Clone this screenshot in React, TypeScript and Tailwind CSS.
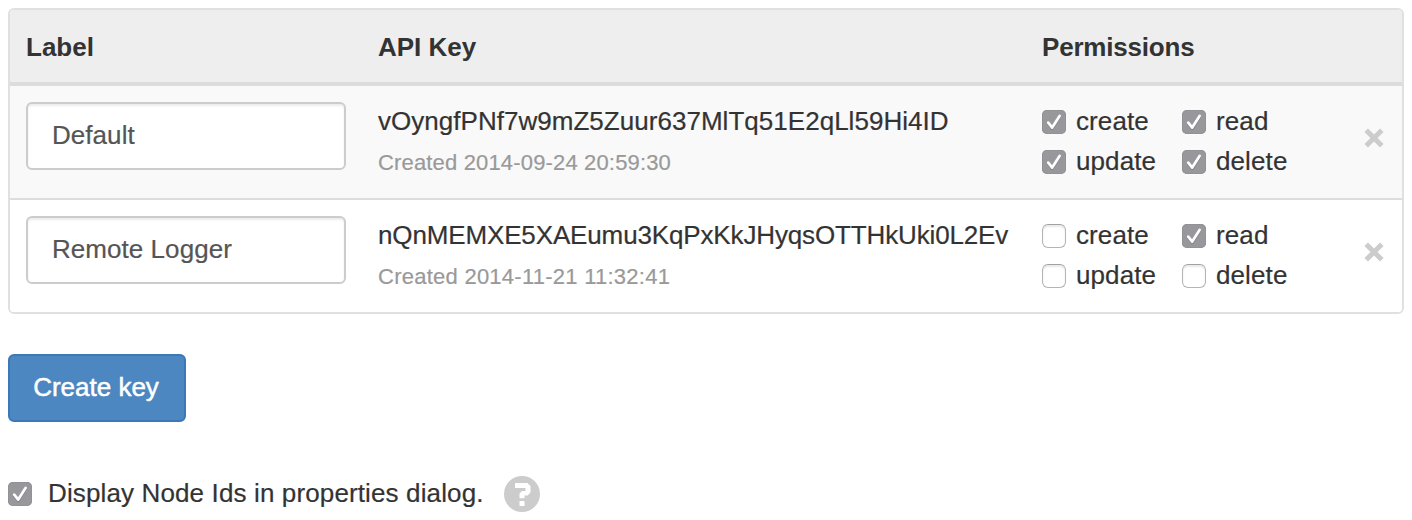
import React from "react";

type Permission = { name: string; on: boolean };
type Key = {
  label: string;
  value: string;
  valueClass: string;
  created: string;
  createdClass: string;
  permissions: Permission[];
};

const keys: Key[] = [
  {
    label: "Default",
    value: "vOyngfPNf7w9mZ5Zuur637MlTq51E2qLl59Hi4ID",
    valueClass: "tracking-[0.03px]",
    created: "2014-09-24 20:59:30",
    createdClass: "tracking-[0.16px]",
    permissions: [
      { name: "create", on: true },
      { name: "read", on: true },
      { name: "update", on: true },
      { name: "delete", on: true },
    ],
  },
  {
    label: "Remote Logger",
    value: "nQnMEMXE5XAEumu3KqPxKkJHyqsOTTHkUki0L2Ev",
    valueClass: "tracking-[-0.14px]",
    created: "2014-11-21 11:32:41",
    createdClass: "tracking-[0.25px]",
    permissions: [
      { name: "create", on: false },
      { name: "read", on: true },
      { name: "update", on: false },
      { name: "delete", on: false },
    ],
  },
];

function Checkbox({ on }: { on: boolean }) {
  if (!on) {
    return (
      <span className="size-6 shrink-0 rounded-[6px] border border-[#b4b4b4] border-t-[#a2a2a2] bg-white shadow-[inset_0_2px_2px_rgba(0,0,0,0.09)]" />
    );
  }
  return (
    <span className="size-6 shrink-0 rounded-[5px] bg-[#98979c] shadow-[inset_0_0_0_1px_#929196]">
      <svg viewBox="0 0 24 24" className="size-6" fill="none" strokeLinecap="round" strokeLinejoin="round">
        <path d="M6.2 13.6 10.2 18.8 17.6 7.2" stroke="#807f84" strokeWidth="2.6" />
        <path d="M6.2 12.6 10.2 17.6 17.6 6" stroke="#fff" strokeWidth="2.7" />
      </svg>
    </span>
  );
}

function KeyRow({ item, className }: { item: Key; className: string }) {
  return (
    <div className={`flex h-28 ${className}`}>
      <div className="w-[352px] pt-4 pl-4">
        <div className="flex h-[68px] w-80 items-center rounded-md border-2 border-[#ccc] bg-white pb-0.5 pl-6 tracking-[0.05px] text-[#555] shadow-[inset_0_2px_2px_rgba(0,0,0,0.075)]">
          {item.label}
        </div>
      </div>
      <div className="w-[664px] pt-[15px] pl-4">
        <div className={`leading-10 ${item.valueClass}`}>{item.value}</div>
        <div className={`pt-0.5 text-[22px] leading-10 text-[#999] ${item.createdClass}`}>Created {item.created}</div>
      </div>
      <div className="grid h-24 w-[320px] grid-cols-[140px_140px] grid-rows-[40px_40px] pt-[15px] pl-4">
        {item.permissions.map((p) => (
          <label key={p.name} className="flex items-center gap-2.5 leading-10 tracking-[0.1px]">
            <span className="flex pt-px">
              <Checkbox on={p.on} />
            </span>
            {p.name}
          </label>
        ))}
      </div>
      <div className="pt-[42px] pl-[18px]">
        <svg viewBox="0 0 20 20" className="size-5" stroke="#ccc" strokeWidth="5">
          <path d="M2.2 2.2 17.8 17.8M17.8 2.2 2.2 17.8" />
        </svg>
      </div>
    </div>
  );
}

export default function App() {
  return (
    <div className="h-[520px] overflow-hidden bg-white p-2 font-['Liberation_Sans',Arial,sans-serif] text-[26px] text-[#333] [-webkit-text-stroke:0.2px]">
      <div className="overflow-hidden rounded-md border-2 border-[#e0e0e0]">
        <div className="flex h-19 border-b-4 border-[#dcdcdc] bg-[#eee] pt-[17px] leading-10 font-bold [-webkit-text-stroke:0]">
          <div className="w-[352px] pl-4">Label</div>
          <div className="w-[664px] pl-4">API Key</div>
          <div className="pl-4 tracking-[-0.2px]">Permissions</div>
        </div>
        <KeyRow item={keys[0]} className="bg-[#f9f9f9]" />
        <div className="h-0.5 bg-[#ddd]" />
        <KeyRow item={keys[1]} className="bg-white" />
      </div>

      <button className="mt-10 flex h-[68px] w-[178px] items-center justify-center rounded-md border-2 border-[#3a78b8] bg-[#4d87c1] pr-0.5 pb-0.5 text-white [-webkit-text-stroke:0.5px]">
        Create key
      </button>

      <div className="mt-[54px] flex h-9 items-center">
        <Checkbox on />
        <span className="-mt-0.5 ml-4 w-[456px] leading-9 tracking-[0.13px]">Display Node Ids in properties dialog.</span>
        <svg viewBox="0 0 36 36" className="size-9">
          <circle cx="18" cy="18" r="18" fill="#ccc" />
          <path d="M11 7H23.5L26.5 10V16.5L23.5 19.5H20.5V22.3H15.5V17.5L18 15H21.5V12H11ZM15.5 25H20.5V30H15.5Z" fill="#fff" />
        </svg>
      </div>
    </div>
  );
}
